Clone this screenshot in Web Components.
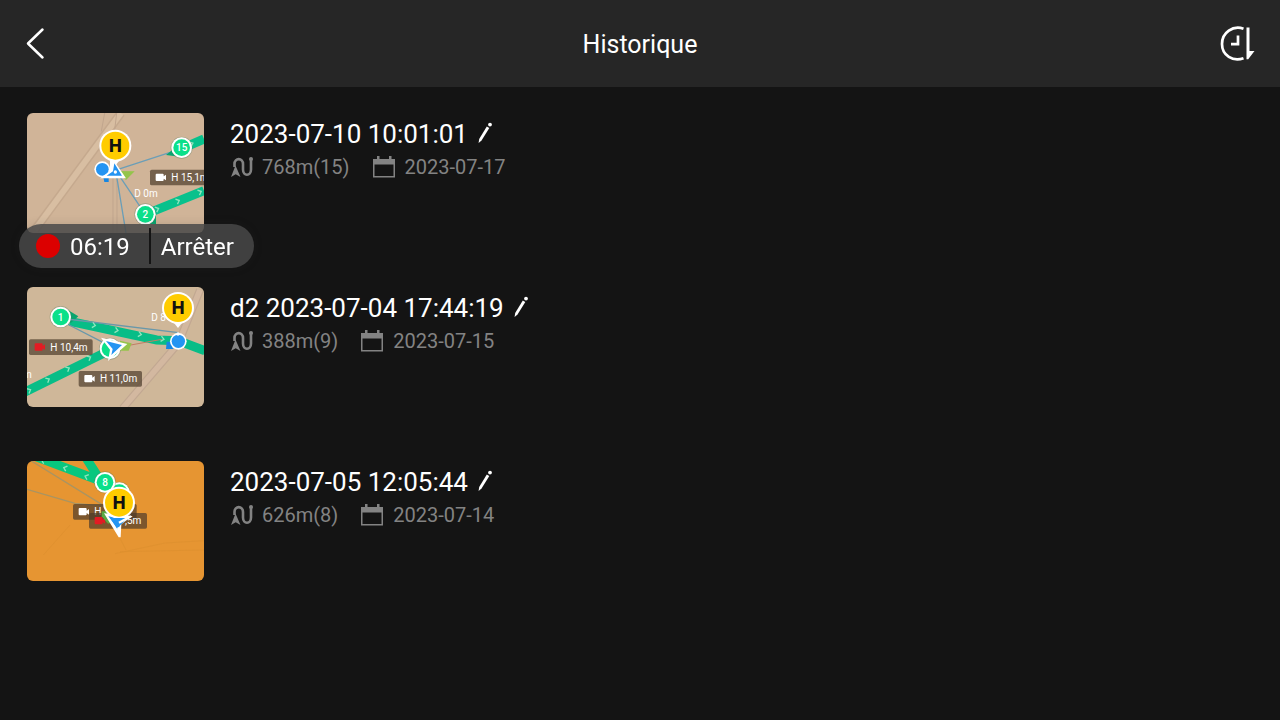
<!DOCTYPE html>
<html lang="fr">
<head>
<meta charset="utf-8">
<meta name="viewport" content="width=device-width, initial-scale=1">
<title>Historique</title>
<style>
  html { background: #141414; }
  body { margin: 0; font-family: Roboto, "Liberation Sans", sans-serif; color: #fff; }
</style>
</head>
<body>
<history-app></history-app>

<template id="history-app">
  <style>
    :host { display: block; min-height: 100vh; background: #141414; }
    main { padding: 26px 27px 40px; }
    record-pill { position: fixed; left: 19px; top: 224px; }
  </style>
  <app-header>Historique</app-header>
  <main>
    <history-list>
      <history-item heading="2023-07-10 10:01:01" distance="768m(15)" date="2023-07-17"><flight-map slot="thumb" scene="a"></flight-map></history-item>
      <history-item heading="d2 2023-07-04 17:44:19" distance="388m(9)" date="2023-07-15"><flight-map slot="thumb" scene="b"></flight-map></history-item>
      <history-item heading="2023-07-05 12:05:44" distance="626m(8)" date="2023-07-14"><flight-map slot="thumb" scene="c"></flight-map></history-item>
    </history-list>
  </main>
  <record-pill time="06:19">Arrêter</record-pill>
</template>

<template id="app-header">
  <style>
    :host { display: block; background: #262626; }
    header { display: grid; grid-template-columns: 1fr auto 1fr; align-items: center; height: 87px; padding: 0 20px; }
    h1 { margin: 0; font-size: 25px; font-weight: 400; line-height: 32px; padding-top: 2px; }
    button { width: 48px; height: 48px; padding: 0; border: 0; background: none; color: inherit; cursor: pointer; }
    button:last-child { justify-self: end; }
    svg { display: block; }
  </style>
  <header>
    <button type="button" aria-label="Retour">
      <svg width="48" height="48" viewBox="0 0 48 48" fill="none" stroke="#fff" stroke-width="2.5" stroke-linecap="round" stroke-linejoin="round"><path d="M22.500 9.500 8 23.500 22.500 37.500"/></svg>
    </button>
    <h1><slot></slot></h1>
    <button type="button" aria-label="Trier par date">
      <svg width="48" height="48" viewBox="0 0 48 48" fill="none" stroke="#fff"><path stroke-width="2.700" d="M31.500 8.700C21 5 10 12.500 10 24S21 42 31.500 38.200"/><path stroke-width="2.700" d="M26 15.500v8.700h-7"/><path fill="#fff" stroke="none" d="M34.500 7.500h3v23.500h5l-6.300 8.300h-1.700z"/></svg>
    </button>
  </header>
</template>

<template id="history-list">
  <style>
    :host { display: flex; flex-direction: column; gap: 54px; }
  </style>
  <slot></slot>
</template>

<template id="history-item">
  <style>
    :host { display: block; }
    article { display: flex; gap: 26px; }
    .info { flex: 1; min-width: 0; padding-top: 4px; }
    .title, .meta, .meta span { display: flex; align-items: center; }
    .title { gap: 8px; height: 34px; }
    h2 { margin: 0; font-size: 26px; font-weight: 400; line-height: 34px; }
    button { padding: 0; border: 0; background: none; cursor: pointer; }
    .meta { gap: 23px; height: 32px; color: #838383; font-size: 20px; line-height: 24px; }
    .meta span { gap: 9px; }
    b { font-weight: 400; }
    svg { display: block; }
  </style>
  <article>
    <slot name="thumb"></slot>
    <div class="info">
      <div class="title">
        <h2></h2>
        <button type="button" aria-label="Renommer">
          <svg width="16" height="24" viewBox="0 0 16 24" fill="#fff"><path d="M10.800 4.500 13.300 6 5.500 18.500 2.600 21 3.200 17z"/><circle cx="14" cy="2.600" r="1.900"/></svg>
        </button>
      </div>
      <div class="meta">
        <span><svg width="23" height="24" viewBox="0 0 23 24"><path fill="none" stroke="#838383" stroke-width="2.600" d="M4.500 12V9C4.500 2.500 13 2.500 13 9V14.500C13 21.500 21 21.500 21 14.500V4"/><path fill="#838383" d="M5.500 10.500 10.500 22 5.700 19.200 1 22z"/><circle cx="21" cy="4" r="2" fill="#838383"/></svg><b class="distance"></b></span>
        <span><svg width="23" height="24" viewBox="0 0 23 24"><path fill="#838383" fill-rule="evenodd" d="M0 4H4V1H6.500V4H16V1H18.500V4H22V22.500H0zM1.500 9.500V21H20.500V9.500z"/></svg><time></time></span>
      </div>
    </div>
  </article>
</template>

<template id="record-pill">
  <style>
    :host { display: block; }
    div { display: flex; align-items: center; width: 235px; height: 44px; border-radius: 22px; background: rgba(72, 72, 72, .85); font-size: 24px; line-height: 32px; box-sizing: border-box; padding: 0 17px; box-shadow: 0 0 10px rgba(48, 48, 48, .15); }
    i { width: 24px; height: 24px; border-radius: 50%; background: #dc0000; margin-right: 10px; }
    time { padding-top: 2px; }
    button { margin-left: 19px; padding: 2px 0 0 10px; border: 0; border-left: 2px solid #141414; height: 36px; background: none; color: inherit; font: inherit; cursor: pointer; }
  </style>
  <div><i></i><time></time><button type="button"><slot></slot></button></div>
</template>

<template id="flight-map">
  <style>
    :host { display: block; flex: none; width: 177px; height: 120px; border-radius: 6px; overflow: hidden; }
    svg { display: block; width: 177px; height: 120px; font-family: Roboto, "Liberation Sans", sans-serif; }
  </style>
</template>

<script>
  const clone = id => document.getElementById(id).content.cloneNode(true);

  class Base extends HTMLElement {
    constructor() {
      super();
      this.attachShadow({ mode: 'open' }).append(clone(this.localName));
    }
    fill(selector, attribute) {
      this.shadowRoot.querySelector(selector).textContent = this.getAttribute(attribute);
    }
  }

  class HistoryItem extends Base {
    connectedCallback() {
      this.fill('h2', 'heading');
      this.fill('.distance', 'distance');
      this.fill('time', 'date');
    }
  }

  class RecordPill extends Base {
    connectedCallback() { this.fill('time', 'time'); }
  }

  /* Map symbols; map units are thirds of a pixel. */
  const home = (x, y) => `<path d="M${x - 17} ${y + 38}L${x} ${y + 60}L${x + 17} ${y + 38}z" fill="#fff"/><circle cx="${x}" cy="${y}" r="48" fill="#fff"/><circle cx="${x}" cy="${y}" r="42" fill="#fc0"/><text x="${x}" y="${y + 18}" font-family="Inter, sans-serif" font-size="51" font-weight="800" text-anchor="middle" fill="#111">H</text>`;
  const waypoint = (x, y, label) => `<circle cx="${x}" cy="${y}" r="33" fill="#5c7c60" opacity=".4"/><circle cx="${x}" cy="${y}" r="31" fill="#fff"/><circle cx="${x}" cy="${y}" r="25" fill="#0be08a"/><text x="${x}" y="${y + 11}" font-size="30" font-weight="500" text-anchor="middle" fill="#fff">${label}</text>`;
  const camera = (x, y, color) => `<path fill="${color}" d="M${x + 2} ${y}h18q3 0 3 3v5l7-5v17l-7-5v4q0 3-3 3h-18q-3 0-3-3v-16q0-3 3-3z"/>`;
  const tag = (x, y, w, color, label) => `<rect x="${x}" y="${y}" width="${w}" height="47" rx="5" fill="#4d3c2b" fill-opacity=".7"/>${camera(x + 18, y + 12, color)}<text x="${x + 64}" y="${y + 34}" font-size="30" fill="#fff">${label}</text>`;
  const chevron = (x, y, angle) => `<path transform="translate(${x} ${y}) rotate(${angle})" d="M-5-8 4 0-5 8" fill="none" stroke="#8fe5bd" stroke-width="4"/>`;

  const scenes = {
    a: `<svg viewBox="21 21 531 360"><rect x="21" y="21" width="531" height="360" fill="#d0b498"/>
      <g fill="none"><path d="M303 21 45 371" stroke="#c5a98e" stroke-width="27"/><path d="M303 21 45 371" stroke="#d8bea2" stroke-width="18"/><path d="M279 200v181M291 200v181M254 21l-10 55M290 21l-7 60" stroke="#c0a58d" stroke-width="3"/></g>
      <g stroke="#6b9eb7" stroke-width="4" fill="none"><path d="M285 193 485 128M287 193 376 325M287 193 318 381"/></g>
      <path d="M376 325 552 254" stroke="#08c18c" stroke-width="27"/><path d="M485 128 552 99" stroke="#08c18c" stroke-width="27"/><path d="M438 147 475 118 467 151zM400 330h8v25l-28-2z" fill="#08a56f"/>
      ${chevron(412, 309, -22)}${chevron(474, 285, -22)}${chevron(540, 258, -22)}${chevron(515, 113, -22)}
      <path d="M290 195 344 196 318 222z" fill="#94c44b"/>
      <text x="343" y="272" font-size="30" fill="#fff">D 0m</text>
      ${waypoint(485, 125, '15')}${waypoint(376, 325, '2')}${tag(390, 191, 190, '#fff', 'H 15,1m')}
      <path d="M248 203 253 228H266V206z" fill="#1686e2"/><circle cx="247" cy="190" r="24" fill="#fff"/><circle cx="247" cy="190" r="19" fill="#2494f2"/>
      ${home(286, 119)}<path d="M279 160 318 217H240L270 195V165z" fill="#fff"/><path d="M283 172 306 209H260L279 196z" fill="#2494f2"/><circle cx="286" cy="198" r="5" fill="#fff"/></svg>`,
    b: `<svg viewBox="21 21 531 360"><rect x="21" y="21" width="531" height="360" fill="#cfb799"/>
      <g fill="none"><path d="M308 385 475 190 540 30" stroke="#c2a892" stroke-width="24"/><path d="M308 385 475 190 540 30" stroke="#d3b8a0" stroke-width="17"/></g>
      <path d="M150 124 410 180 475 182 555 212" stroke="#08bd87" stroke-width="27" fill="none"/><path d="M15 336 265 213" stroke="#08bd87" stroke-width="27"/>
      <path d="M130 82 175 109 152 130z" fill="#08a56f"/><path d="M140 117 475 158M130 126 278 202" stroke="#6998aa" stroke-width="4" fill="none"/><path d="M300 201 425 178" stroke="#c27d65" stroke-width="3"/>
      ${chevron(222, 136, 12)}${chevron(290, 151, 12)}${chevron(360, 163, 12)}${chevron(428, 177, 10)}${chevron(28, 331, -27)}${chevron(84, 299, -27)}${chevron(144, 266, -27)}${chevron(208, 233, -27)}
      <text x="394" y="123" font-size="30" fill="#fff">D 8</text><text x="9" y="294" font-size="30" fill="#fff">m</text>
      ${waypoint(122, 111, '1')}${tag(27, 178, 191, '#e31b23', 'H 10,4m')}${tag(176, 273, 190, '#fff', 'H 11,0m')}
      <path d="M300 182 335 190 326 212H300z" fill="#94c44b"/>${waypoint(270, 206, '')}
      <path d="M243 173 322 192 264 243 270 209z" fill="#fff"/><path d="M258 183 306 195 274 225 278 207z" fill="#2494f2"/>
      <path d="M440 185h20v22h-22z" fill="#1686e2"/>${home(474, 84)}<circle cx="475" cy="184" r="25" fill="#fff"/><circle cx="475" cy="184" r="20" fill="#2494f2"/><circle cx="474" cy="162" r="5" fill="#fff"/></svg>`,
    c: `<svg viewBox="21 18 531 360"><rect x="21" y="18" width="531" height="360" fill="#e69532"/>
      <g fill="none" stroke="#dc902f" stroke-width="2"><path d="M290 230 318 285M285 296 435 264 552 257M150 210 70 300M300 290 552 285"/></g>
      <path d="M45 4 250 81M199 10 244 81" stroke="#08c77e" stroke-width="27" fill="none"/>
      <g fill="none" stroke="#a99462" stroke-width="4"><path d="M21 103 165 145 270 155M34 18 245 148"/></g>
      ${chevron(69, 17, 200)}${chevron(135, 39, 200)}${chevron(199, 65, 200)}
      ${waypoint(298, 113, '')}${waypoint(255, 82, '8')}
      ${tag(159, 147, 191, '#fff', 'H')}${tag(207, 174, 174, '#e31b23', '')}<text x="364" y="206" font-size="30" text-anchor="end" fill="#fff">,5m</text>
      <path d="M245 169h15l14 34-10 3-19-22z" fill="#58a944"/>
      <path d="M252 175 336 183 304 208 302 247 296 247z" fill="#fff"/><path d="M265 184 302 190 296 225z" fill="#2494f2"/>
      ${home(297, 143)}<path d="M271 189h52l-25 25-4 12z" fill="#2494f2"/><path d="M297 203 333 184" stroke="#fff" stroke-width="7"/><circle cx="297" cy="222" r="6" fill="#fff"/></svg>`
  };

  class FlightMap extends Base {
    connectedCallback() {
      this.shadowRoot.querySelector('svg')?.remove();
      this.shadowRoot.append(document.createRange().createContextualFragment(scenes[this.getAttribute('scene')]));
    }
  }

  customElements.define('flight-map', FlightMap);
  customElements.define('history-item', HistoryItem);
  customElements.define('history-list', class extends Base {});
  customElements.define('record-pill', RecordPill);
  customElements.define('app-header', class extends Base {});
  customElements.define('history-app', class extends Base {});
</script>
</body>
</html>
